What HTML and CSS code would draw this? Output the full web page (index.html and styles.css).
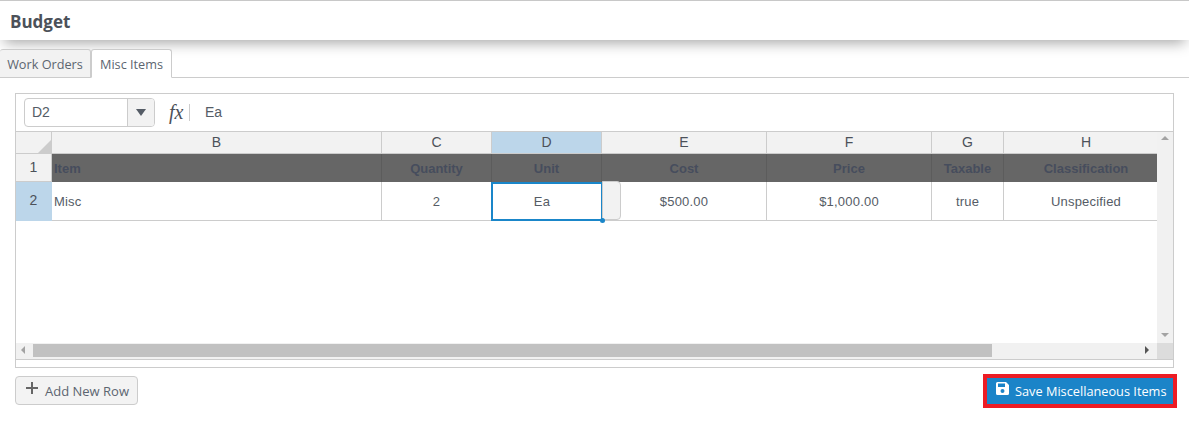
FILE: index.html
```html
<!DOCTYPE html>
<html lang="en">
<head>
<meta charset="utf-8">
<title>Budget</title>
<link rel="stylesheet" href="styles.css">
</head>
<body>
<header class="page-head"><h1>Budget</h1></header>
<nav class="tabs">
  <a class="tab">Work Orders</a>
  <a class="tab tab-active">Misc Items</a>
</nav>
<main class="content">
  <section class="sheet">
    <div class="formula-bar">
      <div class="name-box">
        <span class="name-value">D2</span>
        <span class="name-arrow"><i class="tri-down"></i></span>
      </div>
      <span class="fx">fx</span>
      <span class="formula-value">Ea</span>
    </div>
    <div class="viewport">
      <div class="grid-area">
        <div class="grid">
          <div class="hd corner"><i class="corner-tri"></i></div>
          <div class="hd">B</div>
          <div class="hd">C</div>
          <div class="hd hd-sel">D</div>
          <div class="hd">E</div>
          <div class="hd">F</div>
          <div class="hd">G</div>
          <div class="hd hd-last">H</div>

          <div class="rh rh-1">1</div>
          <div class="th th-left">Item</div>
          <div class="th">Quantity</div>
          <div class="th">Unit</div>
          <div class="th">Cost</div>
          <div class="th">Price</div>
          <div class="th">Taxable</div>
          <div class="th th-last">Classification</div>

          <div class="rh rh-sel">2</div>
          <div class="td td-left">Misc</div>
          <div class="td">2</div>
          <div class="td td-active">Ea<i class="fill-dot"></i><i class="drop-handle"></i></div>
          <div class="td">$500.00</div>
          <div class="td">$1,000.00</div>
          <div class="td">true</div>
          <div class="td td-last">Unspecified</div>
        </div>
      </div>
      <div class="vscroll">
        <i class="tri-up"></i>
        <i class="tri-down-sm"></i>
      </div>
    </div>
    <div class="hscroll-row">
      <div class="hscroll">
        <i class="tri-left"></i>
        <div class="thumb"></div>
        <i class="tri-right"></i>
      </div>
      <div class="scroll-corner"></div>
    </div>
    <div class="sheet-foot"></div>
  </section>
  <div class="actions">
    <button class="btn btn-add" type="button">
      <svg class="ico-plus" width="12" height="12" viewBox="0 0 12 12"><path d="M5 0h2v5h5v2H7v5H5V7H0V5h5z" fill="#666"/></svg>
      Add New Row
    </button>
    <div class="save-outline">
      <button class="btn btn-save" type="button">
        <svg class="ico-save" width="13" height="13" viewBox="0 0 13 13"><path fill-rule="evenodd" d="M1.500 0H10l3 3v8.500A1.500 1.500 0 0 1 11.500 13h-10A1.500 1.500 0 0 1 0 11.500v-10A1.500 1.500 0 0 1 1.500 0zM2 1.500V5h7V1.500zM6.500 7a2 2 0 1 0 0 4 2 2 0 0 0 0-4z" fill="#fff"/></svg>
        Save Miscellaneous Items
      </button>
    </div>
  </div>
</main>
</body>
</html>
```
FILE: styles.css
```css
* { box-sizing: border-box; }
html, body { margin: 0; height: 427px; overflow: hidden; background: #fff; }
body { font-family: "Open Sans", sans-serif; font-size: 13px; color: #555c66; }

.page-head {
  height: 40px;
  padding: 2px 10px 0;
  border-top: 1px solid #c8c8c8;
  background: #fff;
  display: flex;
  align-items: center;
  box-shadow: 0 7px 14px -4px rgba(0, 0, 0, .35);
  position: relative;
}
.page-head h1 { margin: 0; font-size: 17px; font-weight: 700; color: #4c5159; }

.tabs {
  margin-top: 9px;
  height: 29px;
  display: flex;
  border-bottom: 1px solid #ccc;
  position: relative;
}
.tab {
  width: 91px;
  height: 29px;
  padding-top: 1px;
  display: flex;
  align-items: center;
  justify-content: center;
  white-space: nowrap;
  font-size: 12.7px;
  background: #f2f2f2;
  border: 1px solid #ccc;
  border-left-width: 0;
  border-radius: 3px 3px 0 0;
  color: #5c6570;
}
.tab-active {
  width: 81px;
  background: #fff;
  border-left-width: 1px;
  border-bottom-color: #fff;
}

.content { padding: 15px 15px 0; }
.sheet { height: 275px; border: 1px solid #ccc; background: #fff; }

.formula-bar { height: 37px; display: flex; align-items: center; padding: 0 0 1px 8px; }
.name-box {
  width: 131px;
  height: 29px;
  display: flex;
  border: 1px solid #ccc;
  border-radius: 4px;
  overflow: hidden;
}
.name-value {
  flex: 1;
  padding-left: 7px;
  font-size: 14px;
  line-height: 27px;
  font-family: "Liberation Sans", sans-serif;
  color: #555c66;
}
.name-arrow {
  width: 27px;
  background: #f2f2f2;
  border-left: 1px solid #ccc;
  display: flex;
  align-items: center;
  justify-content: center;
}
.tri-down { width: 0; height: 0; border: 5px solid transparent; border-top: 7px solid #555c66; border-bottom: 0; }
.fx {
  margin-left: 14px;
  width: 21px;
  height: 17px;
  border-right: 1px solid #ccc;
  font: italic 400 20px/17px "Liberation Serif", serif;
  color: #4c5159;
}
.formula-value { margin-left: 15px; font-family: "Liberation Sans", sans-serif; font-size: 14px; color: #555c66; }

.viewport { height: 212px; display: flex; border-top: 1px solid #ccc; }
.grid-area { width: 1141px; flex: none; overflow: hidden; }
.grid {
  display: grid;
  grid-template-columns: 36px 330px 110px 110px 165px 165px 72px 164px;
  grid-template-rows: 22px 28px 39px;
  font-family: "Liberation Sans", sans-serif;
  font-size: 13px;
}
.grid > div { display: flex; align-items: center; justify-content: center; }

.hd { background: #f2f2f2; border-right: 1px solid #ccc; border-bottom: 1px solid #ccc; color: #4c5159; font-size: 14px; padding-bottom: 2px; }
.hd-last { border-right: 0; }
.hd-sel { background: #bcd6ea; }
.corner { position: relative; }
.corner-tri {
  position: absolute;
  right: 0;
  bottom: 0;
  width: 0;
  height: 0;
  border-style: solid;
  border-width: 0 0 13px 13px;
  border-color: transparent transparent #ccc transparent;
}

.rh { background: #f2f2f2; color: #4c5159; border-right: 1px solid #ccc; border-bottom: 1px solid #ccc; font-size: 14px; padding-bottom: 2px; }
.rh-sel { background: #bcd6ea; border-color: #bcd6ea; }

.th {
  background: #666;
  border-right: 1px solid #5c5c5c;
  font-weight: 700;
  color: #464d5d;
  padding-top: 1px;
}
.th-last { border-right: 0; }
.th-left, .td-left { justify-content: flex-start !important; padding-left: 2px; }

.td { background: #fff; border-right: 1px solid #ccc; border-bottom: 1px solid #ccc; color: #555c66; letter-spacing: .2px; }
.td-last { border-right: 0; }
.td-active {
  position: relative;
  margin: 0 -1px 0 -1px;
  box-shadow: inset 0 0 0 2px #1a86c9;
  border: 0;
  padding-right: 10px;
}
.fill-dot {
  position: absolute;
  right: -2px;
  bottom: -2px;
  width: 5px;
  height: 5px;
  border-radius: 50%;
  background: #1a86c9;
  z-index: 2;
}
.drop-handle {
  position: absolute;
  left: 111px;
  top: -1px;
  width: 19px;
  height: 39px;
  background: #f2f2f2;
  border: 1px solid #ccc;
  border-radius: 0 4px 4px 0;
  z-index: 1;
}

.vscroll {
  flex: 1;
  background: #f1f1f1;
  display: flex;
  flex-direction: column;
  align-items: center;
  justify-content: space-between;
  padding: 4px 0 6px;
}
.tri-up { width: 0; height: 0; border: 4px solid transparent; border-bottom: 4px solid #a3a3a3; border-top: 0; }
.tri-down-sm { width: 0; height: 0; border: 4px solid transparent; border-top: 4px solid #a3a3a3; border-bottom: 0; }

.hscroll-row { height: 17px; display: flex; border-bottom: 1px solid #ccc; }
.hscroll {
  width: 1141px;
  display: flex;
  align-items: center;
  background: #f1f1f1;
  padding: 0 8px 2px 5px;
}
.tri-left { width: 0; height: 0; border: 4px solid transparent; border-right: 4px solid #a3a3a3; border-left: 0; }
.thumb { width: 959px; height: 13px; margin-left: 8px; background: #c1c1c1; }
.tri-right { width: 0; height: 0; margin-left: auto; border: 4px solid transparent; border-left: 4px solid #555; border-right: 0; }
.scroll-corner { flex: 1; background: #dcdcdc; }
.sheet-foot { height: 7px; }

.actions { display: flex; justify-content: space-between; align-items: flex-start; margin-top: 6px; margin-right: -3px; }
.btn { font-family: "Open Sans", sans-serif; font-size: 13px; cursor: pointer; display: flex; align-items: center; white-space: nowrap; }
.btn-add {
  margin-top: 2px;
  width: 123px;
  height: 29px;
  padding: 0 0 0 10px;
  background: #f3f3f3;
  border: 1px solid #ccc;
  border-radius: 4px;
  color: #5c6570;
}
.ico-plus { margin: -5px 7px 0 0; }
.save-outline { border: 4px solid #ed1c24; width: 194px; height: 34px; }
.btn-save {
  width: 100%;
  height: 100%;
  padding: 0 0 0 9px;
  background: #1b84c8;
  border: 0;
  color: #fff;
  font-size: 12.75px;
}
.ico-save { margin: -5px 6px 0 0; }
```
